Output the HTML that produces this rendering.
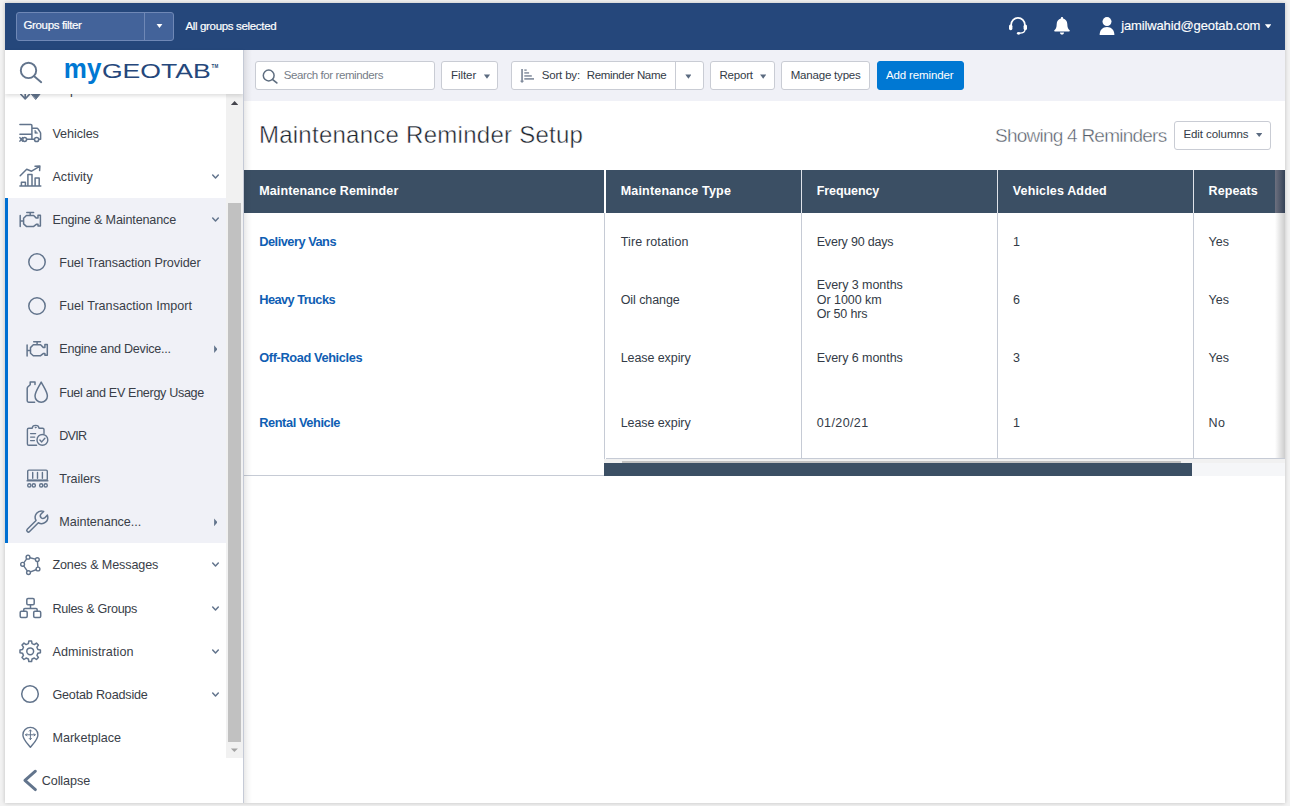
<!DOCTYPE html>
<html lang="en">
<head>
<meta charset="utf-8">
<title>MyGeotab - Maintenance Reminder Setup</title>
<style>
*{box-sizing:border-box;margin:0;padding:0}
html,body{width:1290px;height:806px;overflow:hidden}
body{background:#f2f2f2;font-family:"Liberation Sans",Arial,sans-serif;font-size:13px;color:#333b47;position:relative}
#app{position:absolute;left:5px;top:3px;width:1280px;height:800px;background:#fff;overflow:hidden;box-shadow:0 0 4px rgba(0,0,0,.22)}
.abs,.t,i{position:absolute;display:block}
.t{white-space:nowrap}
svg{position:absolute;display:block;overflow:visible}
/* top bar */
#topbar{position:absolute;left:0;top:0;width:1280px;height:47px;background:#25477b;color:#fff}
#gf{position:absolute;left:11px;top:9px;width:158px;height:29px;background:#43639a;border:1px solid #6f88b6;border-radius:3px}
.cw{width:0;height:0;border-left:3.5px solid transparent;border-right:3.5px solid transparent;border-top:4.5px solid #fff}
/* sidebar */
#side{position:absolute;left:0;top:47px;width:238px;height:753px;background:#fff}
#sidehead{position:absolute;left:0;top:0;width:238px;height:44px;background:#fff;box-shadow:0 2px 4px rgba(0,0,0,.13)}
#navwrap{position:absolute;left:0;top:44px;width:221px;height:664px;overflow:hidden}
#sb{position:absolute;left:221px;top:44px;width:17px;height:664px;background:#f1f1f1}
#active{position:absolute;left:0;top:103.9px;width:221px;height:345px;background:#f0f1f7;border-left:3px solid #0070d2}
.tri{width:0;height:0;border-top:4px solid transparent;border-bottom:4px solid transparent;border-left:3.5px solid #66788c}
/* main */
#main{position:absolute;left:238px;top:47px;width:1042px;height:753px;background:#fff}
#lshadow{position:absolute;left:0;top:0;width:9px;height:753px;background:linear-gradient(to right,#c5cad6 0,#c5cad6 1px,rgba(0,0,0,.085) 1px,rgba(0,0,0,.03) 5px,rgba(0,0,0,0) 9px)}
#toolbar{position:absolute;left:0;top:0;width:1042px;height:51px;background:#f0f1f7}
.btn{position:absolute;border:1px solid #c9ccd4;border-radius:3px;background:#fff}
.car{width:0;height:0;border-left:3px solid transparent;border-right:3px solid transparent;border-top:4px solid #5b6b80}
#thead{position:absolute;left:1px;top:120px;width:1041px;height:43px;background:#3b4f64}
.vsep{width:1px;background:#c6cbd5}

</style>
</head>
<body>
<div id="app">
<div id="topbar">
<div id="gf">
<div class="t" style="left:6.5px;top:5.0px;font-size:11.5px;line-height:14px;color:#fff;letter-spacing:-0.349px;-webkit-text-stroke:.2px #fff;">Groups filter</div>
<i style="left:127px;top:0;width:1px;height:27px;background:#6f88b6"></i>
<i style="left:139.40px;top:10.70px;width:6.20px;height:4.40px;background:#fff;clip-path:polygon(0 0,100% 0,50% 100%)"></i>
</div>
<div class="t" style="left:180.4px;top:16.0px;font-size:11.5px;line-height:14px;color:#fff;letter-spacing:-0.330px;-webkit-text-stroke:.2px #fff;">All groups selected</div>
<svg style="left:1003px;top:13px" width="20" height="20" viewBox="0 0 20 20">
<path d="M3.2 10.2V8.6a6.8 6.8 0 0 1 13.6 0v1.6" fill="none" stroke="#fff" stroke-width="1.7"/>
<rect x="1" y="8.6" width="3.4" height="5.6" rx="1.6" fill="#fff"/>
<rect x="15.6" y="8.6" width="3.4" height="5.6" rx="1.6" fill="#fff"/>
<path d="M17 13.6c0 2.6-2 3.6-5.4 3.6" fill="none" stroke="#fff" stroke-width="1.3"/>
<ellipse cx="10.6" cy="17.3" rx="1.7" ry="1.4" fill="#fff"/>
</svg>
<svg style="left:1048px;top:13px" width="18" height="20" viewBox="0 0 18 20">
<path d="M9 1c.7 0 1.1.5 1.1 1.1v.5c2.5.5 4.2 2.7 4.2 5.4 0 3.6.9 5 2.300 6.300.4.4.2 1.200-.5 1.200H1.900c-.7 0-.9-.8-.5-1.200C2.800 13 3.700 11.600 3.700 8c0-2.700 1.700-4.900 4.200-5.400v-.5C7.900 1.500 8.300 1 9 1z" fill="#fff"/>
<path d="M6.900 16.600h4.200a2.100 2.100 0 0 1-4.200 0z" fill="#fff"/>
</svg>
<svg style="left:1094px;top:13px" width="16" height="20" viewBox="0 0 16 20">
<circle cx="8" cy="5.600" r="4.500" fill="#fff"/>
<path d="M.6 19c0-5 3-8 7.400-8s7.400 3 7.400 8z" fill="#fff"/>
</svg>
<div class="t" style="left:1116.2px;top:14.0px;font-size:13px;line-height:17px;color:#fff;letter-spacing:-0.134px;-webkit-text-stroke:.15px #fff;">jamilwahid@geotab.com</div>
<i style="left:1259.90px;top:21.30px;width:6.50px;height:4.10px;background:#fff;clip-path:polygon(0 0,100% 0,50% 100%)"></i>
</div>
<div id="side">
<div id="navwrap">
<div id="active"></div>
<div class="t" style="left:47.4px;top:-12.0px;font-size:12.6px;line-height:16px;color:#393e48;">Map</div>
<svg style="left:14.0px;top:-14.0px" width="23.0" height="21.0" viewBox="19 79.97 23.0 21.0" fill="none" stroke="#62748c" stroke-width="1.6" stroke-linecap="round" stroke-linejoin="round"><path d="M25.2 84.0V98.6M20.8 94.2L25.2 98.8L29.6 94.2"/><path d="M31.2 93.4H40.6L35.9 99.2Z" fill="#62748c" stroke-width="1"/><path d="M35.9 84.0V94.0"/></svg>
<div class="t" style="left:47.4px;top:32.0px;font-size:12.6px;line-height:16px;color:#393e48;letter-spacing:-0.054px;">Vehicles</div>
<div class="t" style="left:47.4px;top:75.0px;font-size:12.6px;line-height:16px;color:#393e48;letter-spacing:0.062px;">Activity</div>
<div class="t" style="left:47.4px;top:118.0px;font-size:12.6px;line-height:16px;color:#393e48;letter-spacing:-0.154px;">Engine &amp; Maintenance</div>
<div class="t" style="left:54.3px;top:161.0px;font-size:12.6px;line-height:16px;color:#393e48;letter-spacing:-0.087px;">Fuel Transaction Provider</div>
<div class="t" style="left:54.3px;top:204.0px;font-size:12.6px;line-height:16px;color:#393e48;letter-spacing:0.015px;">Fuel Transaction Import</div>
<div class="t" style="left:54.3px;top:247.0px;font-size:12.6px;line-height:16px;color:#393e48;letter-spacing:-0.234px;">Engine and Device...</div>
<div class="t" style="left:54.3px;top:291.0px;font-size:12.6px;line-height:16px;color:#393e48;letter-spacing:-0.333px;">Fuel and EV Energy Usage</div>
<div class="t" style="left:54.3px;top:334.0px;font-size:12.6px;line-height:16px;color:#393e48;letter-spacing:-0.776px;">DVIR</div>
<div class="t" style="left:54.3px;top:377.0px;font-size:12.6px;line-height:16px;color:#393e48;letter-spacing:-0.079px;">Trailers</div>
<div class="t" style="left:54.3px;top:420.0px;font-size:12.6px;line-height:16px;color:#393e48;letter-spacing:-0.054px;">Maintenance...</div>
<div class="t" style="left:47.4px;top:463.0px;font-size:12.6px;line-height:16px;color:#393e48;letter-spacing:-0.122px;">Zones &amp; Messages</div>
<div class="t" style="left:47.4px;top:507.0px;font-size:12.6px;line-height:16px;color:#393e48;letter-spacing:-0.303px;">Rules &amp; Groups</div>
<div class="t" style="left:47.4px;top:550.0px;font-size:12.6px;line-height:16px;color:#393e48;letter-spacing:0.105px;">Administration</div>
<div class="t" style="left:47.4px;top:593.0px;font-size:12.6px;line-height:16px;color:#393e48;letter-spacing:-0.185px;">Geotab Roadside</div>
<div class="t" style="left:47.4px;top:636.0px;font-size:12.6px;line-height:16px;color:#393e48;letter-spacing:0.006px;">Marketplace</div>
<svg style="left:206.0px;top:79.8px" width="9.0" height="6.0" viewBox="211 173.8 9.0 6.0" fill="none" stroke="#62748c" stroke-width="1.5" stroke-linecap="round" stroke-linejoin="round"><path d="M212.7 174.8L215.5 177.7L218.3 174.8"/></svg>
<svg style="left:206.0px;top:123.2px" width="9.0" height="6.0" viewBox="211 217.2 9.0 6.0" fill="none" stroke="#62748c" stroke-width="1.5" stroke-linecap="round" stroke-linejoin="round"><path d="M212.7 218.2L215.5 221.1L218.3 218.2"/></svg>
<svg style="left:206.0px;top:468.0px" width="9.0" height="6.0" viewBox="211 562.0 9.0 6.0" fill="none" stroke="#62748c" stroke-width="1.5" stroke-linecap="round" stroke-linejoin="round"><path d="M212.7 563.0L215.5 565.9L218.3 563.0"/></svg>
<svg style="left:206.0px;top:511.8px" width="9.0" height="6.0" viewBox="211 605.8 9.0 6.0" fill="none" stroke="#62748c" stroke-width="1.5" stroke-linecap="round" stroke-linejoin="round"><path d="M212.7 606.8L215.5 609.7L218.3 606.8"/></svg>
<svg style="left:206.0px;top:554.8px" width="9.0" height="6.0" viewBox="211 648.8 9.0 6.0" fill="none" stroke="#62748c" stroke-width="1.5" stroke-linecap="round" stroke-linejoin="round"><path d="M212.7 649.8L215.5 652.7L218.3 649.8"/></svg>
<svg style="left:206.0px;top:597.6px" width="9.0" height="6.0" viewBox="211 691.6 9.0 6.0" fill="none" stroke="#62748c" stroke-width="1.5" stroke-linecap="round" stroke-linejoin="round"><path d="M212.7 692.6L215.5 695.5L218.3 692.6"/></svg>
<i style="left:209.10px;top:251.30px;width:3.40px;height:7.80px;background:#62748c;clip-path:polygon(0 0,100% 50%,0 100%)"></i>
<i style="left:209.10px;top:424.40px;width:3.40px;height:7.80px;background:#62748c;clip-path:polygon(0 0,100% 50%,0 100%)"></i>
<svg style="left:14.0px;top:29.0px" width="23.0" height="20.0" viewBox="19 123 23.0 20.0" fill="none" stroke="#62748c" stroke-width="1.5" stroke-linecap="round" stroke-linejoin="round"><path d="M19.9 124.4H30.9Q31.9 124.4 31.9 125.4V139.1M19.9 134.2H31.9M32 128.3H37Q37.6 128.3 38 128.9L40.3 132.3Q40.6 132.8 40.6 133.4V139.2H38.9M26.9 139.3H34.2M19.9 137.6L22.5 141.1M19.9 141.1L22.5 137.6"/><circle cx="24.7" cy="139.5" r="1.9"/><circle cx="36.6" cy="139.5" r="2.1"/><path d="M34.9 130.4V133.3H37.4Z" fill="#62748c" stroke-width=".6"/></svg>
<svg style="left:14.0px;top:71.0px" width="23.0" height="23.0" viewBox="19 165 23.0 23.0" fill="none" stroke="#62748c" stroke-width="1.5" stroke-linecap="round" stroke-linejoin="round"><path d="M19.9 186.1H40.8M21.4 186V182.3H25.4V186M27.9 186V174.5H32V186M35.1 186V178.1H39.2V186M20.2 175.8L26.7 169.3L31.6 171.2L39.6 166.3M35 166.2L39.9 166L39.6 170.6"/></svg>
<svg style="left:14.0px;top:117.0px" width="23.0" height="17.0" viewBox="19 211 23.0 17.0" fill="none" stroke="#62748c" stroke-width="1.5" stroke-linecap="round" stroke-linejoin="round"><path d="M20.2 215.6V226.6M20.2 221.1H23.6M26.8 212.5H33.6M30.2 212.5V215.4M23.6 218.3L26.4 215.5H33.7L36.3 218.1H38.0V215.2H40.4V225.9H38.0V224.3H36.3L33.7 226.4H26.4L23.6 223.9Z"/></svg>
<svg style="left:21.0px;top:246.0px" width="23.0" height="17.0" viewBox="26 340 23.0 17.0" fill="none" stroke="#62748c" stroke-width="1.5" stroke-linecap="round" stroke-linejoin="round"><path d="M27.1 344.9V355.9M27.1 350.4H30.5M33.7 341.8H40.5M37.1 341.8V344.7M30.5 347.6L33.3 344.8H40.6L43.2 347.4H44.9V344.5H47.3V355.2H44.9V353.6H43.2L40.6 355.7H33.3L30.5 353.2Z"/></svg>
<svg style="left:22.2px;top:158.4px" width="20.0" height="20.0" viewBox="27.200000000000003 252.39999999999998 20.0 20.0" fill="none" stroke="#62748c" stroke-width="1.5" stroke-linecap="round" stroke-linejoin="round"><circle cx="37.2" cy="262.4" r="8.2"/></svg>
<svg style="left:22.2px;top:201.5px" width="20.0" height="20.0" viewBox="27.200000000000003 295.5 20.0 20.0" fill="none" stroke="#62748c" stroke-width="1.5" stroke-linecap="round" stroke-linejoin="round"><circle cx="37.2" cy="305.5" r="8.2"/></svg>
<svg style="left:15.3px;top:590.4px" width="20.0" height="20.0" viewBox="20.3 684.4 20.0 20.0" fill="none" stroke="#62748c" stroke-width="1.5" stroke-linecap="round" stroke-linejoin="round"><circle cx="30.3" cy="694.4" r="8.3"/></svg>
<svg style="left:21.0px;top:286.0px" width="23.0" height="24.0" viewBox="26 380 23.0 24.0" fill="none" stroke="#62748c" stroke-width="1.5" stroke-linecap="round" stroke-linejoin="round"><path d="M34.6 402.2H28.6Q27.2 402.2 27.2 400.8V388.5Q27.2 387.5 28 386.7L30.2 384.7V382H35V384.6"/><path d="M41.2 382.1C43.8 387 47.4 392 47.4 396A6.2 6.2 0 0 1 35 396C35 392 38.600 387 41.2 382.1Z"/></svg>
<svg style="left:21.0px;top:330.0px" width="23.0" height="23.0" viewBox="26 424 23.0 23.0" fill="none" stroke="#62748c" stroke-width="1.4" stroke-linecap="round" stroke-linejoin="round"><path d="M36.6 445.3H28.8Q27.4 445.3 27.4 443.9V429.6Q27.4 428.2 28.8 428.2H32.2Q32.4 425.4 35.600 425.4Q38.800 425.4 39 428.2H42.6Q44 428.2 44 429.6V433.4"/><path d="M30.6 433.6H35.6M30.6 437.1H34.7M30.6 440.6H34.4"/><circle cx="35.6" cy="427.5" r=".5" fill="#62748c" stroke-width=".8"/><circle cx="42.4" cy="439.9" r="5.4"/><path d="M39.9 440L41.700 441.9L44.9 438.2"/></svg>
<svg style="left:21.0px;top:374.0px" width="23.0" height="20.0" viewBox="26 468 23.0 20.0" fill="none" stroke="#62748c" stroke-width="1.4" stroke-linecap="round" stroke-linejoin="round"><rect x="27.700" y="470.1" width="19.600" height="10" rx="1.200"/><path d="M27.4 480.700H47.6" stroke-width="1.800"/><path d="M32.7 472.5V478.2M37.5 472.5V478.2M42.4 472.5V478.2"/><circle cx="29.3" cy="485.4" r="1.6"/><circle cx="33.8" cy="485.4" r="1.6"/><circle cx="41.2" cy="485.4" r="1.6"/><circle cx="45.700" cy="485.4" r="1.6"/></svg>
<svg style="left:21.0px;top:416.0px" width="23.0" height="23.0" viewBox="26 510 23.0 23.0" fill="none" stroke="#62748c" stroke-width="1.5" stroke-linecap="round" stroke-linejoin="round"><path d="M36.04 520.45A6.3 6.3 0 0 1 43.65 511.38L40.85 514.18A2.700 2.700 0 0 0 44.62 517.95L47.42 515.15A6.3 6.3 0 0 1 38.35 522.76L29.58 531.53A1.63 1.63 0 0 1 27.27 529.22Z"/></svg>
<svg style="left:14.0px;top:460.0px" width="23.0" height="22.0" viewBox="19 554 23.0 22.0" fill="none" stroke="#62748c" stroke-width="1.4" stroke-linecap="round" stroke-linejoin="round"><path d="M28 557.2L37.3 559.6L38 569L28.5 572.6L22.6 564.3Z"/><circle cx="28" cy="557.2" r="1.9" fill="#fff"/><circle cx="37.3" cy="559.6" r="1.9" fill="#fff"/><circle cx="38" cy="569" r="1.9" fill="#fff"/><circle cx="28.5" cy="572.6" r="1.9" fill="#fff"/><circle cx="22.6" cy="564.3" r="1.9" fill="#fff"/></svg>
<svg style="left:14.0px;top:503.0px" width="23.0" height="22.0" viewBox="19 597 23.0 22.0" fill="none" stroke="#62748c" stroke-width="1.5" stroke-linecap="round" stroke-linejoin="round"><rect x="26.800" y="598.6" width="7.400" height="6.200" rx="1.200"/><rect x="20.2" y="611.2" width="7" height="6.200" rx="1.200"/><rect x="33.7" y="611.2" width="7" height="6.200" rx="1.200"/><path d="M30.5 604.8V608.6M23.700 611V609.800Q23.700 608.6 24.900 608.6H36Q37.2 608.6 37.2 609.800V611"/></svg>
<svg style="left:14.0px;top:546.0px" width="23.0" height="23.0" viewBox="19 640 23.0 23.0" fill="none" stroke="#62748c" stroke-width="1.5" stroke-linecap="round" stroke-linejoin="round"><path d="M28.36 643.62 L28.81 641.09 L31.59 641.09 L32.04 643.62 L34.33 644.57 L36.44 643.10 L38.40 645.06 L36.93 647.17 L37.88 649.46 L40.41 649.91 L40.41 652.69 L37.88 653.14 L36.93 655.43 L38.40 657.54 L36.44 659.50 L34.33 658.03 L32.04 658.98 L31.59 661.51 L28.81 661.51 L28.36 658.98 L26.07 658.03 L23.96 659.50 L22.00 657.54 L23.47 655.43 L22.52 653.14 L19.99 652.69 L19.99 649.91 L22.52 649.46 L23.47 647.17 L22.00 645.06 L23.96 643.10 L26.07 644.57Z" stroke-width="1.5"/><circle cx="30.2" cy="651.3" r="3.4"/></svg>
<svg style="left:16.0px;top:632.0px" width="19.0" height="23.0" viewBox="21 726 19.0 23.0" fill="none" stroke="#62748c" stroke-width="1.4" stroke-linecap="round" stroke-linejoin="round"><path d="M30.4 747.3C27 743 22.9 739.2 22.9 734.9A7.5 7.5 0 0 1 37.9 734.9C37.9 739.2 33.800 743 30.4 747.3Z"/><path d="M30.4 730V739.600M25.600 734.800H35.2M29.3 731.100L30.4 730L31.5 731.100M29.3 738.5L30.4 739.600L31.5 738.5M26.700 733.700L25.600 734.800L26.700 735.900M34.100 733.700L35.2 734.800L34.100 735.900" stroke-width="1"/></svg>
</div>
<div id="sb">
<i style="left:4.90px;top:6.90px;width:7.40px;height:4.20px;background:#45454d;clip-path:polygon(50% 0,100% 100%,0 100%)"></i>
<i style="left:2.3px;top:108.5px;width:12.6px;height:539.4px;background:#c1c1c1"></i>
<i style="left:4.90px;top:654.40px;width:7.00px;height:3.60px;background:#a3a3a3;clip-path:polygon(0 0,100% 0,50% 100%)"></i>
</div>
<div id="sidehead">
<svg style="left:13.0px;top:10.0px" width="26.0" height="25.0" viewBox="18 60 26.0 25.0" fill="none" stroke="#62748c" stroke-width="1.9" stroke-linecap="round" stroke-linejoin="round"><circle cx="28.5" cy="70.4" r="7.700"/><path d="M34.2 76.200L41.2 82.2"/></svg>
<svg style="left:55px;top:6px" width="165" height="34" viewBox="60 56 165 34">
<text x="63.8" y="78.3" font-family="Liberation Sans, Arial, sans-serif" font-weight="bold" font-size="27" fill="#0078d3" textLength="37.6" lengthAdjust="spacingAndGlyphs">my</text>
<text x="101.9" y="78.3" font-family="Liberation Sans, Arial, sans-serif" font-size="20" fill="#25477b" textLength="108.8" lengthAdjust="spacingAndGlyphs">GEOTAB</text>
<text x="211.6" y="68" font-family="Liberation Sans, Arial, sans-serif" font-weight="bold" font-size="4.6" fill="#25477b" textLength="6.6" lengthAdjust="spacingAndGlyphs">TM</text>
</svg>
</div>
<svg style="left:17.0px;top:718.0px" width="16.0" height="25.0" viewBox="22 768 16.0 25.0" fill="none" stroke="#62748c" stroke-width="2.9" stroke-linecap="round" stroke-linejoin="round"><path d="M35.4 771.2L24.9 780.4L35.4 789.6"/></svg>
<div class="t" style="left:36.7px;top:723.0px;font-size:12.6px;line-height:16px;color:#393e48;letter-spacing:-0.079px;">Collapse</div>
</div>
<div id="main">
<div id="toolbar">
<div class="btn" style="left:12.0px;top:11.0px;width:180.0px;height:29.0px;"><svg style="left:5.5px;top:6.5px" width="17" height="16" viewBox="261.5 68.5 17 16" fill="none" stroke="#5f6e80" stroke-linecap="round"><circle cx="268.2" cy="75" r="5.4" stroke-width="1.5"/><path d="M272.2 79.1L276.3 82.4" stroke-width="1.7"/></svg><div class="t" style="left:27.8px;top:6.0px;font-size:11.5px;line-height:14px;color:#767d88;letter-spacing:-0.409px;">Search for reminders</div></div>
<div class="btn" style="left:198.0px;top:11.0px;width:57.0px;height:29.0px;"><div class="t" style="left:9.0px;top:6.0px;font-size:11.5px;line-height:14px;color:#333b47;letter-spacing:-0.059px;">Filter</div><i style="left:41.90px;top:12.40px;width:6.20px;height:4.40px;background:#5b6b80;clip-path:polygon(0 0,100% 0,50% 100%)"></i></div>
<div class="btn" style="left:268.0px;top:11.0px;width:193.0px;height:29.0px;"><svg style="left:7.0px;top:6.0px" width="17" height="16" viewBox="519 68 17 16" fill="#808b9c" stroke="none"><rect x="521.2" y="69" width="1.7" height="12.4"/><path d="M519.9 80.8H524.2L522.05 83.1Z"/><rect x="524.3" y="69.4" width="2.4" height="1.4"/><rect x="524.3" y="72.2" width="4.8" height="1.45"/><rect x="524.3" y="75.2" width="7.5" height="1.5"/><rect x="524.3" y="78.1" width="9.7" height="1.6"/></svg><div class="t" style="left:29.7px;top:6.0px;font-size:11.5px;line-height:14px;color:#333b47;letter-spacing:-0.166px;">Sort by:</div><div class="t" style="left:74.7px;top:6.0px;font-size:11.5px;line-height:14px;color:#333b47;letter-spacing:-0.317px;">Reminder Name</div><i style="left:163.0px;top:0;width:1px;height:27px;background:#c9ccd4"></i><i style="left:173.30px;top:12.40px;width:6.20px;height:4.40px;background:#5b6b80;clip-path:polygon(0 0,100% 0,50% 100%)"></i></div>
<div class="btn" style="left:467.0px;top:11.0px;width:65.0px;height:29.0px;"><div class="t" style="left:8.5px;top:6.0px;font-size:11.5px;line-height:14px;color:#333b47;letter-spacing:-0.203px;">Report</div><i style="left:49.10px;top:12.40px;width:6.20px;height:4.40px;background:#5b6b80;clip-path:polygon(0 0,100% 0,50% 100%)"></i></div>
<div class="btn" style="left:538.0px;top:11.0px;width:89.0px;height:29.0px;"><div class="t" style="left:8.7px;top:6.0px;font-size:11.5px;line-height:14px;color:#333b47;letter-spacing:-0.195px;">Manage types</div></div>
<div class="btn" style="left:634.0px;top:11.0px;width:87.0px;height:29.0px;background:#0078d3;border-color:#0078d3"><div class="t" style="left:8.0px;top:6.0px;font-size:11.5px;line-height:14px;color:#fff;letter-spacing:-0.136px;">Add reminder</div></div>
</div>
<div class="t" style="left:15.9px;top:70.0px;font-size:24px;line-height:29px;color:#1c242e;letter-spacing:0.261px;-webkit-text-stroke:.45px #fff;">Maintenance Reminder Setup</div>
<div class="t" style="left:752.0px;top:74.0px;font-size:19px;line-height:23px;color:#565d69;letter-spacing:-0.762px;-webkit-text-stroke:.4px #fff;">Showing 4 Reminders</div>
<div class="btn" style="left:931.0px;top:71.0px;width:97.0px;height:29.0px;"><div class="t" style="left:8.4px;top:5.0px;font-size:11.5px;line-height:14px;color:#333b47;letter-spacing:-0.061px;">Edit columns</div><i style="left:81.00px;top:10.90px;width:6.40px;height:4.20px;background:#5b6b80;clip-path:polygon(0 0,100% 0,50% 100%)"></i></div>
<div id="thead" style="left:1px;top:119.7px;width:1041px;height:43.1px">
<div class="t" style="left:15.2px;top:13.3px;font-size:12.5px;line-height:16px;color:#fff;font-weight:bold;letter-spacing:0.118px;">Maintenance Reminder</div>
<div class="t" style="left:376.7px;top:13.3px;font-size:12.5px;line-height:16px;color:#fff;font-weight:bold;letter-spacing:0.185px;">Maintenance Type</div>
<div class="t" style="left:572.7px;top:13.3px;font-size:12.5px;line-height:16px;color:#fff;font-weight:bold;letter-spacing:-0.079px;">Frequency</div>
<div class="t" style="left:768.8px;top:13.3px;font-size:12.5px;line-height:16px;color:#fff;font-weight:bold;letter-spacing:0.148px;">Vehicles Added</div>
<div class="t" style="left:964.6px;top:13.3px;font-size:12.5px;line-height:16px;color:#fff;font-weight:bold;letter-spacing:0.095px;">Repeats</div>
<i style="left:360px;top:0;width:1.6px;height:43.1px;background:#fff"></i>
<i style="left:557px;top:0;width:1px;height:43.1px;background:#dfe3e9"></i>
<i style="left:753px;top:0;width:1px;height:43.1px;background:#dfe3e9"></i>
<i style="left:949px;top:0;width:1px;height:43.1px;background:#dfe3e9"></i>
</div>
<i class="vsep" style="left:361.4px;top:162.8px;height:250.2px"></i>
<i class="vsep" style="left:558.0px;top:162.8px;height:245.4px"></i>
<i class="vsep" style="left:754.0px;top:162.8px;height:245.4px"></i>
<i class="vsep" style="left:950.0px;top:162.8px;height:245.4px"></i>
<div class="t" style="left:16.2px;top:183.0px;font-size:12.8px;line-height:17px;color:#0f5eb3;font-weight:bold;letter-spacing:-0.489px;">Delivery Vans</div>
<div class="t" style="left:377.7px;top:184.0px;font-size:12.5px;line-height:16px;color:#333b47;letter-spacing:0.136px;">Tire rotation</div>
<div class="t" style="left:573.7px;top:184.0px;font-size:12.5px;line-height:16px;color:#333b47;letter-spacing:-0.193px;">Every 90 days</div>
<div class="t" style="left:769.9px;top:184.0px;font-size:12.5px;line-height:16px;color:#333b47;">1</div>
<div class="t" style="left:965.6px;top:184.0px;font-size:12.5px;line-height:16px;color:#333b47;letter-spacing:-0.031px;">Yes</div>
<div class="t" style="left:16.2px;top:241.0px;font-size:12.8px;line-height:17px;color:#0f5eb3;font-weight:bold;letter-spacing:-0.554px;">Heavy Trucks</div>
<div class="t" style="left:377.7px;top:242.0px;font-size:12.5px;line-height:16px;color:#333b47;letter-spacing:-0.076px;">Oil change</div>
<div class="t" style="left:573.7px;top:227.0px;font-size:12.5px;line-height:16px;color:#333b47;letter-spacing:-0.053px;">Every 3 months</div>
<div class="t" style="left:573.7px;top:242.0px;font-size:12.5px;line-height:16px;color:#333b47;letter-spacing:-0.030px;">Or 1000 km</div>
<div class="t" style="left:573.7px;top:256.0px;font-size:12.5px;line-height:16px;color:#333b47;letter-spacing:-0.167px;">Or 50 hrs</div>
<div class="t" style="left:769.9px;top:242.0px;font-size:12.5px;line-height:16px;color:#333b47;">6</div>
<div class="t" style="left:965.6px;top:242.0px;font-size:12.5px;line-height:16px;color:#333b47;letter-spacing:-0.031px;">Yes</div>
<div class="t" style="left:16.2px;top:299.0px;font-size:12.8px;line-height:17px;color:#0f5eb3;font-weight:bold;letter-spacing:-0.385px;">Off-Road Vehicles</div>
<div class="t" style="left:377.7px;top:300.0px;font-size:12.5px;line-height:16px;color:#333b47;letter-spacing:-0.081px;">Lease expiry</div>
<div class="t" style="left:573.7px;top:300.0px;font-size:12.5px;line-height:16px;color:#333b47;letter-spacing:-0.053px;">Every 6 months</div>
<div class="t" style="left:769.9px;top:300.0px;font-size:12.5px;line-height:16px;color:#333b47;">3</div>
<div class="t" style="left:965.6px;top:300.0px;font-size:12.5px;line-height:16px;color:#333b47;letter-spacing:-0.031px;">Yes</div>
<div class="t" style="left:16.2px;top:364.0px;font-size:12.8px;line-height:17px;color:#0f5eb3;font-weight:bold;letter-spacing:-0.421px;">Rental Vehicle</div>
<div class="t" style="left:377.7px;top:365.0px;font-size:12.5px;line-height:16px;color:#333b47;letter-spacing:-0.081px;">Lease expiry</div>
<div class="t" style="left:573.7px;top:365.0px;font-size:12.5px;line-height:16px;color:#333b47;letter-spacing:0.405px;">01/20/21</div>
<div class="t" style="left:769.9px;top:365.0px;font-size:12.5px;line-height:16px;color:#333b47;">1</div>
<div class="t" style="left:965.6px;top:365.0px;font-size:12.5px;line-height:16px;color:#333b47;letter-spacing:0.310px;">No</div>
<i style="left:362.5px;top:408.0px;width:679.5px;height:1.0px;background:#c6cbd5"></i>
<i style="left:361.4px;top:409.0px;width:680.6px;height:4.0px;background:#f1f1f1"></i>
<i style="left:379.0px;top:411.0px;width:559.0px;height:2.0px;background:#c1c1c1"></i>
<i style="left:1.0px;top:425.0px;width:1041.0px;height:1.0px;background:#c6cbd5"></i>
<i style="left:949.0px;top:413.0px;width:93.0px;height:12.7px;background:#f5f6f8"></i>
<i style="left:361.0px;top:413.0px;width:588.0px;height:12.7px;background:#3b4f64"></i>
<i style="left:1032.0px;top:119.7px;width:10.0px;height:43.1px;background:linear-gradient(to right,rgba(150,140,150,.55),rgba(40,40,60,.35))"></i>
<i style="left:1032.0px;top:162.8px;width:10.0px;height:245.2px;background:linear-gradient(to right,rgba(0,0,0,0),rgba(0,0,0,.2))"></i>
<div id="lshadow"></div>
</div>
</div>
</body>
</html>
